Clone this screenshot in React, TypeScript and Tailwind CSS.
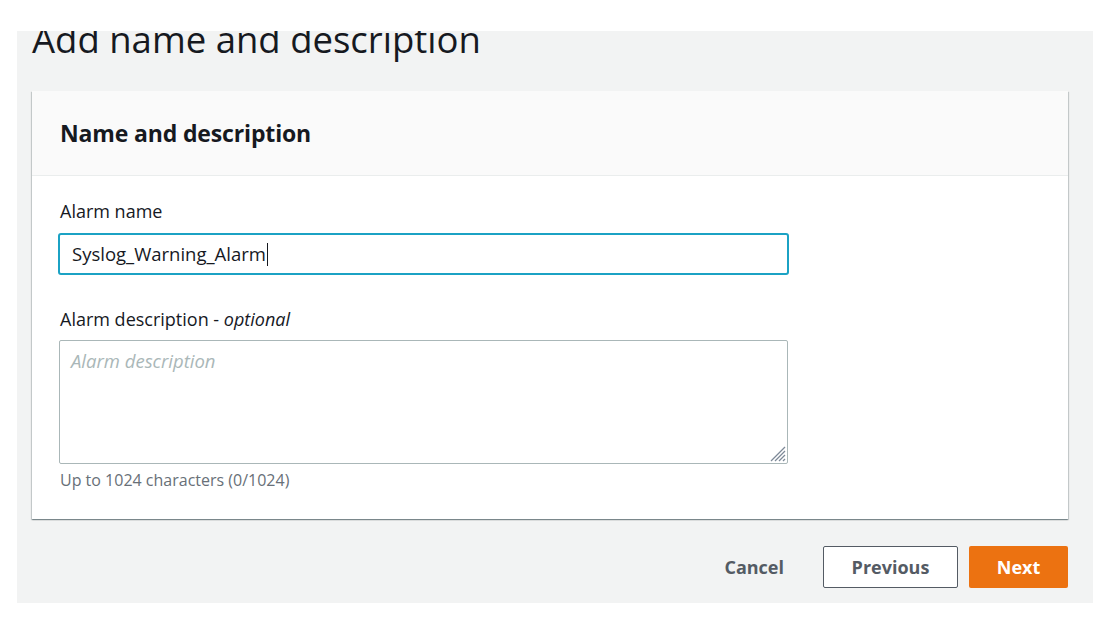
import React from "react";

export default function App() {
  const font = { fontFamily: '"Open Sans", "Noto Sans", Arial, sans-serif' };
  return (
    <div className="w-[1101px] h-[637px] bg-white text-[#16191f]" style={font}>
      <div className="h-[31px]" />
      <div className="ml-[17px] w-[1076px] h-[572px] bg-[#f2f3f3] overflow-hidden pl-[15px] pr-[25px] flex flex-col">
        <h1 className="mt-[-14px] h-[44px] text-[36.5px] leading-[44px] font-normal text-[#16191f] whitespace-nowrap">
          Add name and description
        </h1>
        <div className="mt-[30px] bg-white shadow-[0_1px_1px_0_rgba(0,28,36,0.3),1px_1px_1px_0_rgba(0,28,36,0.15),-1px_1px_1px_0_rgba(0,28,36,0.15)]">
          <div className="bg-[#fafafa] border-b border-[#eaeded] px-[28px] pt-[27px] pb-[27px]">
            <h2 className="text-[23px] leading-[30px] font-bold text-[#16191f] tracking-[-0.15px]">Name and description</h2>
          </div>
          <div className="px-[26px] pt-[23px] pb-[28px]">
            <div className="text-[18px] leading-[24px] text-[#16191f] pl-[2px]">Alarm name</div>
            <div className="mt-[10px] w-[731px] h-[42px] border-2 border-[#1ba2c4] rounded-[3px] flex items-center pl-[12px] text-[18.5px] leading-[24px] text-[#16191f]">
              <span>Syslog_Warning_Alarm</span>
              <span className="inline-block w-px h-[23px] bg-[#16191f] ml-[1px]" />
            </div>
            <div className="mt-[32px] text-[18px] leading-[24px] text-[#16191f] pl-[2px]">
              Alarm description - <span className="italic">optional</span>
            </div>
            <div className="relative mt-[9px] ml-[1px] w-[729px] h-[124px] border border-[#aab7b8] rounded-[2px] pl-[11px] pt-[8px]">
              <span className="italic text-[18.5px] leading-[24px] text-[#aab7b8]">Alarm description</span>
              <svg className="absolute right-[1px] bottom-[1px]" width="17" height="17" viewBox="0 0 17 17">
                <g stroke="#7d8998" strokeWidth="1.3">
                  <line x1="2" y1="16" x2="16" y2="2" />
                  <line x1="6" y1="16" x2="16" y2="6" />
                  <line x1="10" y1="16" x2="16" y2="10" />
                  <line x1="14" y1="16" x2="16" y2="14" />
                </g>
              </svg>
            </div>
            <div className="mt-[5px] pl-[2px] text-[16px] leading-[22px] text-[#687078]">Up to 1024 characters (0/1024)</div>
          </div>
        </div>
        <div className="mt-[27px] flex justify-end items-center">
          <button className="h-[42px] px-[20px] text-[18px] font-bold text-[#545b64] mr-[19px]">Cancel</button>
          <button className="h-[42px] w-[135px] border border-[#545b64] rounded-[2px] bg-white text-[18px] font-bold text-[#545b64]">Previous</button>
          <button className="ml-[11px] h-[42px] w-[99px] rounded-[2px] bg-[#ec7211] text-[18px] font-bold text-white">Next</button>
        </div>
      </div>
    </div>
  );
}
